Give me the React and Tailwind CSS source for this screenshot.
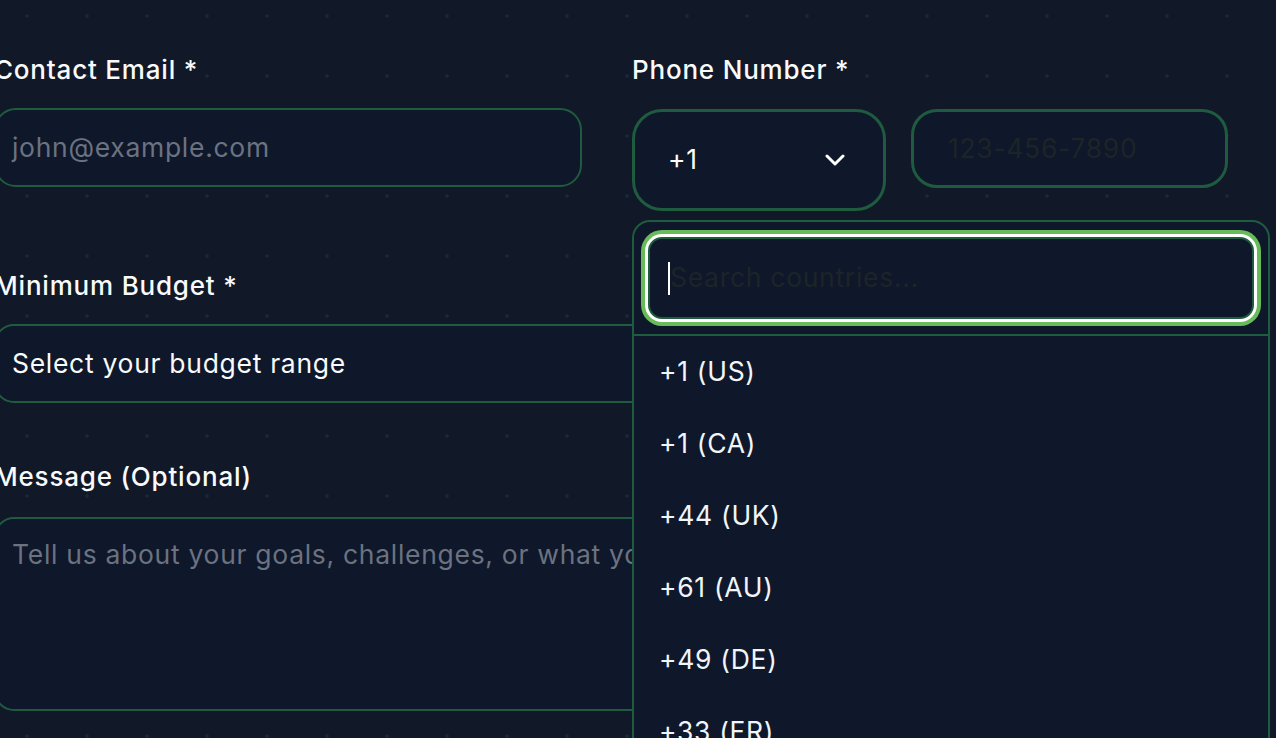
import React from 'react';

const countries = ['+1 (US)', '+1 (CA)', '+44 (UK)', '+61 (AU)', '+49 (DE)', '+33 (FR)', '+81 (JP)'];

const ChevronDown = () => (
  <svg width="20" height="12" viewBox="0 0 20 12" fill="none">
    <polyline points="2,2 10,10 18,2" stroke="#ffffff" strokeWidth="3" strokeLinecap="round" strokeLinejoin="round" />
  </svg>
);

const App = () => {
  return (
    <div
      className="relative w-full h-[738px] overflow-hidden bg-[#111827] bg-[radial-gradient(circle,#19273a_1.5px,transparent_2px)] bg-[size:60px_60px] bg-[position:-3px_-14px] text-[26.5px] tracking-[0.7px] text-[#f1f5f9]"
      style={{ fontFamily: 'Inter, "Noto Sans", sans-serif' }}
    >
      <div className="ml-[-6px] w-[1234px] pt-[51px]">
        {/* Email + phone row */}
        <div className="grid grid-cols-[588px_596px] gap-x-[50px] items-start">
          <div>
            <div className="text-[26px] tracking-[0.8px] leading-[38px] font-medium text-[#f8fafc]">Contact Email *</div>
            <div className="mt-[19px] h-[79px] rounded-[22px] border-2 border-[#1e5b3f] bg-[#0f172a] px-[16px] flex items-center text-[#6b7280]">
              john@example.com
            </div>
          </div>

          <div className="relative">
            <div className="text-[26px] tracking-[0.8px] leading-[38px] font-medium text-[#f8fafc]">Phone Number *</div>
            <div className="mt-[20px] flex items-start gap-[25px]">
              <div className="w-[254px] h-[102px] rounded-[30px] border-[3px] border-[#1e5b3f] bg-[#0f172a] pl-[33px] pr-[38px] flex items-center justify-between text-white">
                <span>+1</span>
                <ChevronDown />
              </div>
              <div className="w-[317px] h-[79px] rounded-[26px] border-[3px] border-[#1e5b3f] bg-[#0f172a] pl-[34px] flex items-center text-[#1d2428]">
                123-456-7890
              </div>
            </div>

            {/* Country dropdown */}
            <div className="absolute left-0 top-[169px] z-10 w-[638px] h-[620px] rounded-[18px] border-2 border-[#1e5b3f] bg-[#0f172a]">
              <div className="px-[14px] pt-[15px] pb-[15px] border-b-2 border-[#1e5b3f]">
                <div className="h-[82px] rounded-[14px] border-2 border-[#1e5b3f] bg-[#0f172a] shadow-[0_0_0_3px_#ffffff,0_0_0_7px_#68bb59] pl-[18px] flex items-center">
                  <span className="w-[2px] h-[33px] bg-white" />
                  <span className="text-[#1d2428]">Search countries...</span>
                </div>
              </div>
              <div>
                {countries.map((c) => (
                  <div key={c} className="h-[72px] pl-[25px] flex items-center text-[#f1f5f9]">
                    {c}
                  </div>
                ))}
              </div>
            </div>
          </div>
        </div>

        {/* Budget */}
        <div className="mt-[56px]">
          <div className="text-[26px] tracking-[0.8px] leading-[38px] font-medium text-[#f8fafc]">Minimum Budget *</div>
          <div className="mt-[19px] h-[79px] rounded-[20px] border-2 border-[#1e5b3f] bg-[#0f172a] px-[16px] flex items-center text-[#f8fafc]">
            Select your budget range
          </div>
        </div>

        {/* Message */}
        <div className="mt-[55px]">
          <div className="text-[26px] tracking-[0.8px] leading-[38px] font-medium text-[#f8fafc]">Message (Optional)</div>
          <div className="mt-[21px] h-[194px] rounded-[20px] border-2 border-[#1e5b3f] bg-[#0f172a] px-[16px] pt-[16px] leading-[38px] text-[#6b7280] whitespace-nowrap overflow-hidden">
            Tell us about your goals, challenges, or what you hope to achieve...
          </div>
        </div>
      </div>
    </div>
  );
};

export default App;
